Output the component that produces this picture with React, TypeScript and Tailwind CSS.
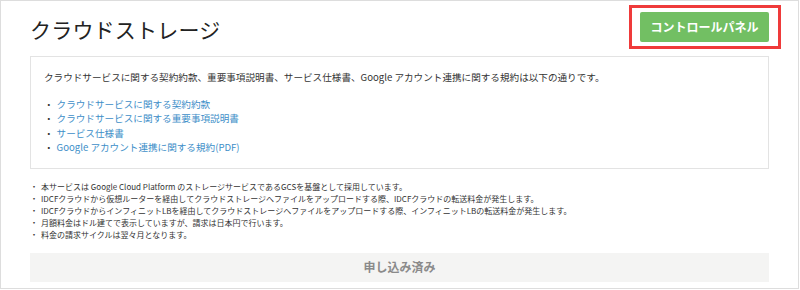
const links = [
  'クラウドサービスに関する契約約款',
  'クラウドサービスに関する重要事項説明書',
  'サービス仕様書',
  'Google アカウント連携に関する規約(PDF)',
];

const notes = [
  '本サービスは Google Cloud Platform のストレージサービスであるGCSを基盤として採用しています。',
  'IDCFクラウドから仮想ルーターを経由してクラウドストレージへファイルをアップロードする際、IDCFクラウドの転送料金が発生します。',
  'IDCFクラウドからインフィニットLBを経由してクラウドストレージへファイルをアップロードする際、インフィニットLBの転送料金が発生します。',
  '月額料金はドル建てで表示していますが、請求は日本円で行います。',
  '料金の請求サイクルは翌々月となります。',
];

export default function App() {
  return (
    <div
      className="w-[799px] h-[289px] border border-[#dddddd] bg-white px-[29px] text-[#333]"
      style={{ fontFamily: '"Noto Sans CJK JP", "Noto Sans", sans-serif' }}
    >
      <div className="flex h-[55px] items-start justify-between">
        <h1 className="mt-[13px] text-[21px] leading-[30px] text-[#222] tracking-[0.2px]">
          クラウドストレージ
        </h1>
        <div className="relative mt-[11px]">
          <span className="absolute -left-[11px] -right-[12px] -top-[7px] -bottom-[7px] border-[3px] border-[#ef3a3a]" />
          <button className="block w-[129px] h-[30px] rounded-[2px] bg-[#72bf63] text-white text-[12px] font-bold">
            コントロールパネル
          </button>
        </div>
      </div>

      <div className="border border-[#e3e3e3] px-[13px] pt-[13px] pb-[13px] text-[9.6px] leading-[14.5px]">
        <p>
          クラウドサービスに関する契約約款、重要事項説明書、サービス仕様書、Google アカウント連携に関する規約は以下の通りです。
        </p>
        <ul className="mt-[12px]">
          {links.map((l) => (
            <li key={l} className="flex gap-[3px]">
              <span>・</span>
              <a href="#" className="text-[#3d8ec8]">
                {l}
              </a>
            </li>
          ))}
        </ul>
      </div>

      <ul className="mt-[12px] text-[8px] leading-[12px] text-[#333]">
        {notes.map((n) => (
          <li key={n} className="flex gap-[3px]">
            <span>・</span>
            <span>{n}</span>
          </li>
        ))}
      </ul>

      <div className="mt-[12px] h-[29px] bg-[#f4f4f3] flex items-center justify-center text-[12px] font-bold text-[#8a8a8a]">
        申し込み済み
      </div>
    </div>
  );
}
